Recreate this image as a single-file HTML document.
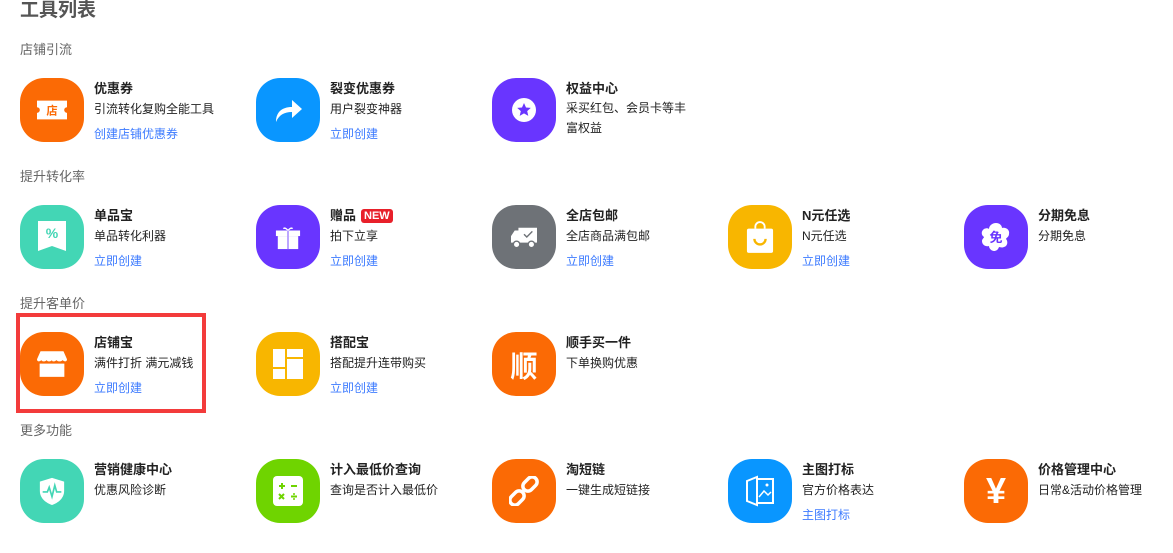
<!DOCTYPE html>
<html><head><meta charset="utf-8"><style>
*{margin:0;padding:0;box-sizing:border-box}
body{width:1173px;height:553px;overflow:hidden;background:#fff;font-family:"Liberation Sans","Noto Sans CJK SC",sans-serif;position:relative;color:#333}
.h1{position:absolute;left:20px;top:-5px;font-size:19px;font-weight:bold;color:#555}
.sec{position:absolute;left:20px;font-size:13px;color:#666;line-height:16px}
.item{position:absolute;width:230px;height:64px}
.ic{position:absolute;left:0;top:0;width:64px;height:64px;border-radius:24px;display:flex;align-items:center;justify-content:center}
.t{position:absolute;left:74px;top:3px;font-size:13px;font-weight:bold;color:#222;line-height:16px;white-space:nowrap}
.d{position:absolute;left:74px;top:23px;font-size:12px;color:#222;line-height:16px;width:130px}
.l{position:absolute;left:74px;top:48px;font-size:12px;color:#3d7bff;line-height:16px;white-space:nowrap}
.new{display:inline-block;background:#e8202a;color:#fff;font-size:11px;font-weight:bold;border-radius:3px;padding:0 3px;line-height:14px;margin-left:5px;vertical-align:1px}
.box{position:absolute;left:16px;top:313px;width:190px;height:100px;border:4px solid #f33b3b}
</style></head><body>
<div class="h1">工具列表</div>
<div class="sec" style="top:42px">店铺引流</div>
<div class="sec" style="top:169px">提升转化率</div>
<div class="sec" style="top:296px">提升客单价</div>
<div class="sec" style="top:423px">更多功能</div>

<div class="item" style="left:20px;top:78px"><div class="ic" style="background:#fb6a05"><svg width="30" height="20" viewBox="0 0 32 20"><path d="M0 0H32V7A3 3 0 0 0 32 13V20H0V13A3 3 0 0 0 0 7Z" fill="#fff"/><text x="16" y="15" font-size="12" font-weight="bold" fill="#fb6a05" text-anchor="middle" font-family="Noto Sans CJK SC">店</text></svg></div><div class="t">优惠券</div><div class="d">引流转化复购全能工具</div><div class="l">创建店铺优惠券</div></div>
<div class="item" style="left:256px;top:78px"><div class="ic" style="background:#0996ff"><svg width="32" height="32" viewBox="0 0 32 32"><path d="M4 28C4 18 10 13 20 13V6L30 15L20 24V18C12 18 7 21 4 28Z" fill="#fff"/></svg></div><div class="t">裂变优惠券</div><div class="d">用户裂变神器</div><div class="l">立即创建</div></div>
<div class="item" style="left:492px;top:78px"><div class="ic" style="background:#6935ff"><svg width="28" height="28" viewBox="0 0 28 28"><circle cx="14" cy="14" r="12" fill="#fff"/><path d="M14 7l2 4.5 4.8.4-3.6 3.2 1.1 4.8L14 17.4 9.7 19.9l1.1-4.8L7.2 11.9l4.8-.4z" fill="#6935ff"/></svg></div><div class="t">权益中心</div><div class="d" style="line-height:20px;top:20px">采买红包、会员卡等丰富权益</div></div>

<div class="item" style="left:20px;top:205px"><div class="ic" style="background:#43d6b5"><svg width="28" height="32" viewBox="0 0 28 32"><path d="M0 0H28V30L14 25L0 30Z" fill="#fff"/><text x="14" y="17" font-size="14" font-weight="bold" fill="#43d6b5" text-anchor="middle">%</text></svg></div><div class="t">单品宝</div><div class="d">单品转化利器</div><div class="l">立即创建</div></div>
<div class="item" style="left:256px;top:205px"><div class="ic" style="background:#6935ff"><svg width="26" height="26" viewBox="0 0 28 28"><path d="M9 5c2-2 5 2 5 2s3-4 5-2" stroke="#fff" stroke-width="1.5" fill="none"/><rect x="1" y="7" width="26" height="6" fill="#fff"/><rect x="3" y="13" width="22" height="14" fill="#fff"/><rect x="13" y="7" width="2" height="20" fill="#b7a0ff"/></svg></div><div class="t">赠品<span class="new">NEW</span></div><div class="d">拍下立享</div><div class="l">立即创建</div></div>
<div class="item" style="left:492px;top:205px"><div class="ic" style="background:#6e7277"><svg width="30" height="26" viewBox="0 0 32 28"><path d="M10 4H30V20H2V13L6 7H10Z" fill="#fff"/><circle cx="8" cy="22" r="3.5" fill="#fff" stroke="#6e7277" stroke-width="1.5"/><circle cx="24" cy="22" r="3.5" fill="#fff" stroke="#6e7277" stroke-width="1.5"/><path d="M16 11l3 3 6-6" stroke="#6e7277" stroke-width="1.5" fill="none"/></svg></div><div class="t">全店包邮</div><div class="d">全店商品满包邮</div><div class="l">立即创建</div></div>
<div class="item" style="left:728px;top:205px"><div class="ic" style="background:#f8b600"><svg width="28" height="32" viewBox="0 0 30 34"><path d="M10 8V6a5 5 0 0 1 10 0v2" stroke="#fff" stroke-width="2" fill="none"/><rect x="1" y="8" width="28" height="26" rx="2" fill="#fff"/><path d="M9 19a6 6 0 0 0 12 0" stroke="#f8b600" stroke-width="2.5" fill="none"/></svg></div><div class="t">N元任选</div><div class="d">N元任选</div><div class="l">立即创建</div></div>
<div class="item" style="left:964px;top:205px"><div class="ic" style="background:#6935ff"><svg width="32" height="32" viewBox="0 0 32 32"><path d="M16 2c4 0 6 3 6 5 4-1 8 2 7 6 0 3-3 4-3 5 2 2 2 7-2 8-2 1-4 0-5 0-1 3-3 4-5 4s-5-2-5-5c-3 1-7-1-7-5 0-2 2-3 2-4-3-2-3-6 0-8 2-1 4-1 5 0 0-3 3-6 7-6Z" fill="#fff"/><text x="16" y="21" font-size="13" font-weight="bold" fill="#6935ff" text-anchor="middle" font-family="Noto Sans CJK SC">免</text></svg></div><div class="t">分期免息</div><div class="d">分期免息</div></div>

<div class="item" style="left:20px;top:332px"><div class="ic" style="background:#fb6a05"><svg width="30" height="27" viewBox="0 0 34 30"><path d="M4 0H30L34 9C34 12 31 12 29 10 27 12 24 12 22 10 20 12 17 12 17 10 15 12 12 12 11 10 9 12 6 12 5 10 3 12 0 12 0 9Z" fill="#fff"/><rect x="3" y="14" width="28" height="15" fill="#fff"/></svg></div><div class="t">店铺宝</div><div class="d">满件打折 满元减钱</div><div class="l">立即创建</div></div>
<div class="item" style="left:256px;top:332px"><div class="ic" style="background:#f8b600"><svg width="30" height="30" viewBox="0 0 30 30"><rect x="0" y="0" width="12" height="18" fill="#fff"/><rect x="14" y="0" width="16" height="8" fill="#fff"/><rect x="0" y="20" width="12" height="10" fill="#fff"/><rect x="14" y="10" width="16" height="20" fill="#fff"/></svg></div><div class="t">搭配宝</div><div class="d">搭配提升连带购买</div><div class="l">立即创建</div></div>
<div class="item" style="left:492px;top:332px"><div class="ic" style="background:#fb6a05"><span style="color:#fff;font-size:30px;font-weight:bold;font-family:'Noto Sans CJK SC',sans-serif;transform:scaleX(.9)">顺</span></div><div class="t">顺手买一件</div><div class="d">下单换购优惠</div></div>

<div class="item" style="left:20px;top:459px"><div class="ic" style="background:#43d6b5"><svg width="28" height="30" viewBox="0 0 30 32"><path d="M15 2L28 6V16C28 24 21 29 15 31 9 29 2 24 2 16V6Z" fill="#fff"/><path d="M5 17H10L12 12L15 22L18 10L20 17H25" stroke="#43d6b5" stroke-width="1.8" fill="none"/></svg></div><div class="t">营销健康中心</div><div class="d">优惠风险诊断</div></div>
<div class="item" style="left:256px;top:459px"><div class="ic" style="background:#6fd400"><svg width="30" height="30" viewBox="0 0 30 30"><rect width="30" height="30" rx="4" fill="#fff"/><path d="M6 10H12M9 7V13M18 10H24M6 18L11 23M11 18L6 23M18 20.5H24" stroke="#6fd400" stroke-width="2"/><circle cx="21" cy="18" r="1" fill="#6fd400"/><circle cx="21" cy="23" r="1" fill="#6fd400"/></svg></div><div class="t">计入最低价查询</div><div class="d">查询是否计入最低价</div></div>
<div class="item" style="left:492px;top:459px"><div class="ic" style="background:#fb6a05"><svg width="30" height="30" viewBox="0 0 30 30"><g stroke="#fff" stroke-width="3.5" fill="none"><rect x="3" y="14" width="10" height="16" rx="5" transform="rotate(45 8 22)"/><rect x="16" y="0" width="10" height="16" rx="5" transform="rotate(45 21 8)"/></g></svg></div><div class="t">淘短链</div><div class="d">一键生成短链接</div></div>
<div class="item" style="left:728px;top:459px"><div class="ic" style="background:#0996ff"><svg width="30" height="32" viewBox="0 0 30 32"><path d="M2 6L12 2V30L2 26Z" stroke="#fff" stroke-width="2" fill="none"/><path d="M12 4H28V28H12" stroke="#fff" stroke-width="2" fill="none"/><path d="M14 22L19 16L23 20L26 17" stroke="#fff" stroke-width="1.5" fill="none"/><circle cx="22" cy="10" r="1.5" fill="#fff"/></svg></div><div class="t">主图打标</div><div class="d">官方价格表达</div><div class="l">主图打标</div></div>
<div class="item" style="left:964px;top:459px"><div class="ic" style="background:#fb6a05"><span style="color:#fff;font-size:36px;font-weight:bold">¥</span></div><div class="t">价格管理中心</div><div class="d" style="width:200px">日常&amp;活动价格管理</div></div>

<div class="box"></div>
</body></html>
